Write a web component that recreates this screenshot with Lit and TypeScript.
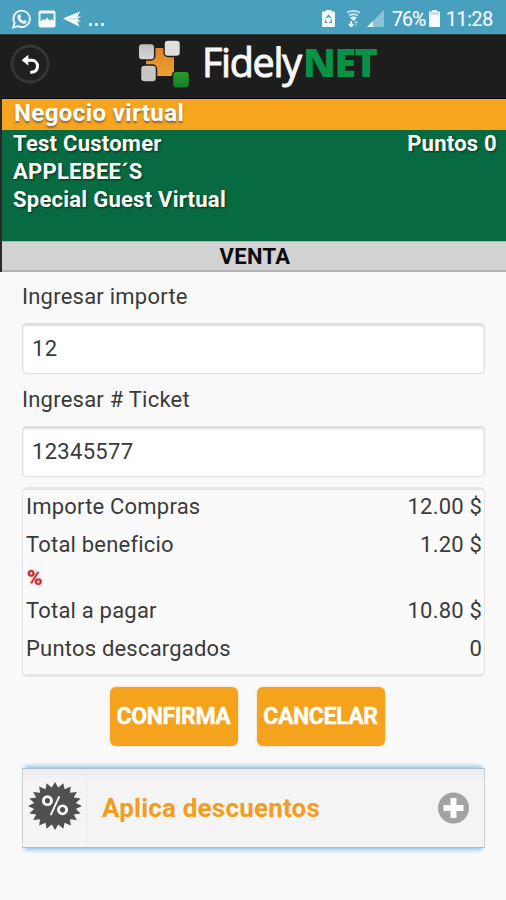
import { LitElement, html, css } from "lit";
import { customElement } from "lit/decorators.js";

const sealPoints = (teeth: number, outer: number, inner: number): string =>
  Array.from({ length: teeth * 2 }, (_, i) => {
    const a = (Math.PI * i) / teeth - Math.PI / 2;
    const r = i % 2 ? inner : outer;
    return `${(50 + r * Math.cos(a)).toFixed(2)},${(50 + r * Math.sin(a)).toFixed(2)}`;
  }).join(" ");

@customElement("status-bar")
class StatusBar extends LitElement {
  static styles = css`
    :host { display: flex; height: 34px; background: #489fbe; color: #f4fbfd; align-items: center; box-sizing: border-box; padding: 3px 14px 0 12px; font: 19.500px/32px Roboto, sans-serif; }
    .left { display: flex; flex: 1; align-items: center; }
    .dots { display: flex; gap: 3.200px; margin: 11px 0 0 7px; }
    .dots i { width: 3px; height: 3px; border-radius: 1px; background: #f4fbfd; }
    svg { display: block; flex: none; }
    .pic { margin-left: 6px; }
    .plane { margin-left: 7px; }
    .wifi { margin-left: 11px; }
    .signal { margin-left: 6px; }
    .pct { margin-left: 8px; width: 35px; letter-spacing: -0.900px; white-space: nowrap; -webkit-text-stroke: 0.200px #f4fbfd; }
    .batt { margin-left: 2px; }
    .time { margin-left: 6px; width: 46px; letter-spacing: -0.350px; white-space: nowrap; -webkit-text-stroke: 0.200px #f4fbfd; }
    .text { position: relative; top: 1px; }
  `;
  render() {
    return html`
      <div class="left">
        <svg width="20" height="20" viewBox="0 0 20 20" fill="none">
          <path d="M1.2 18.4 2.6 14A8.2 8.2 0 1 1 6 17.2Z" stroke="#f4fbfd" stroke-width="1.900" />
          <path d="M6.800 5.200 8.300 5.400 9 7.800 8 8.900Q9 11 11.400 12L12.500 10.900 14.800 12Q14.800 14.500 12.200 14.700Q7 14 5.300 8.400Q5.200 6 6.800 5.200Z" fill="#f4fbfd" />
        </svg>
        <svg class="pic" width="18" height="18" viewBox="0 0 18 18">
          <rect x=".5" y=".5" width="17" height="17" rx="2" fill="#f4fbfd" />
          <path d="M2.500 3.500h13v7.500l-2-2-1.800 1.500-2.700-3-2.500 3-1.500-1.500-2.500 2.500Z" fill="#489fbe" />
        </svg>
        <svg class="plane" width="19" height="16" viewBox="0 0 19 16">
          <path d="M0 7.600 17.500 .3 14.300 5.500 18 5.500 14.300 8 18 10.500 14.300 10.500 16.500 15.700Z" fill="#f4fbfd" />
          <path d="M6 7.800H14" stroke="#b8dce8" stroke-width="1" />
        </svg>
        <span class="dots"><i></i><i></i><i></i></span>
      </div>
      <svg width="13" height="17" viewBox="0 0 13 17">
        <path d="M3.500 0h6v1.500H12q1 0 1 1V16q0 1-1 1H1q-1 0-1-1V2.500q0-1 1-1h2.500Z" fill="#f4fbfd" />
        <path d="M4.200 8 6.500 5.200 8.800 8M9.300 9.500V12.500H7M5.500 12.500H3.500V9.800" fill="none" stroke="#489fbe" stroke-width="1.200" />
      </svg>
      <svg class="wifi" width="15" height="17" viewBox="0 0 15 17" fill="none">
        <path d="M1 2.500Q7.500-.5 14 2.500M3 5.500Q7.500 3 12 5.500" stroke="#c4e1eb" stroke-width="1.800" />
        <path d="M4 7.500Q7.500 5.300 11 7.500L7.500 11Z" fill="#f4fbfd" />
        <path d="M5.200 11v5.500M3 14l2.200 2.500L7.400 14" stroke="#f4fbfd" stroke-width="1.700" />
        <path d="M10 16.500V11M8.500 13 10 11l2 2" stroke="#94c8da" stroke-width="1.300" />
      </svg>
      <svg class="signal" width="17" height="17" viewBox="0 0 17 17">
        <path d="M17 0V17H0Z" fill="#8ac3d7" />
        <path d="M6 11V17H0Z" fill="#e4f3f8" />
      </svg>
      <span class="pct text">76%</span>
      <svg class="batt" width="11" height="17" viewBox="0 0 11 17">
        <path d="M3 0h5v1.500h3V17H0V1.500h3Z" fill="#f4fbfd" />
        <path d="M1 2.500h9v2H1Z" fill="#b4dae7" />
      </svg>
      <span class="time text">11:28</span>
    `;
  }
}

@customElement("brand-header")
class BrandHeader extends LitElement {
  static styles = css`
    :host { display: flex; height: 64px; background: #1d1d1d; box-sizing: border-box; padding-left: 10px; border-top: 1px solid #303c40; }
    .back { margin-top: 9px; flex: none; }
    .mark { margin: 3px 0 0 87px; flex: none; }
    .name { margin-left: 9px; height: 60px; font: 600 39.500px/60px "Open Sans", "Noto Sans", sans-serif; white-space: nowrap; display: flex; margin-top: -3px; }
    .fidely { color: #f7f7f7; width: 101px; font-weight: 500; letter-spacing: -1.300px; -webkit-text-stroke: 1px #f7f7f7; }
    .net { color: #079246; font-weight: 800; letter-spacing: -1.500px; }
  `;
  render() {
    return html`
      <svg class="back" width="40" height="40" viewBox="0 0 40 40" fill="none">
        <circle cx="20" cy="20" r="18" fill="#202020" stroke="#353535" stroke-width="2.800" />
        <path d="M15.500 16.300H21.500C25.500 16.300 27.500 19.300 27.500 22.200C27.500 25.800 24.800 28.200 20.300 28.500" stroke="#fff" stroke-width="3" />
        <path d="M11.600 16.200 18.300 10.700V21.400Z" fill="#fff" />
      </svg>
      <svg class="mark" width="56" height="52" viewBox="0 0 56 52">
        <defs>
          <linearGradient id="o" x2="0" y2="1"><stop stop-color="#dd8424" /><stop offset="1" stop-color="#eca232" /></linearGradient>
          <linearGradient id="g" x2="0" y2="1"><stop stop-color="#2aa02f" /><stop offset="1" stop-color="#137d22" /></linearGradient>
          <linearGradient id="w" x2="0" y2="1"><stop stop-color="#bfbdbf" /><stop offset="1" stop-color="#d9d6d6" /></linearGradient>
        </defs>
        <path d="M14 10H37V34Q37 38 33 38H15Q9 38 9 30V18Z" fill="url(#o)" />
        <g stroke="#1d1d1d" stroke-width="1.500">
          <rect x="1.200" y="5.500" width="16.500" height="16.500" rx="4" fill="url(#w)" />
          <rect x="27" y="2" width="16.500" height="16.500" rx="4" fill="#dedede" />
          <rect x="3.500" y="27" width="16" height="17" rx="4" fill="#c9c6c8" />
          <rect x="35.500" y="33.300" width="17" height="17" rx="4" fill="url(#g)" />
        </g>
      </svg>
      <div class="name"><span class="fidely">Fidely</span><span class="net">NET</span></div>
    `;
  }
}

@customElement("summary-box")
class SummaryBox extends LitElement {
  static styles = css`
    :host { display: block; box-sizing: border-box; height: 190px; margin-top: 10px; padding: 0 2px 0 3px; border: 1.500px solid #e4e4e4; border-top: 3px solid #e6e6e6; border-bottom: 3px solid #e6e6e6; border-radius: 5px; background: #fafafa; }
    .row { display: flex; justify-content: space-between; height: 38px; line-height: 33px; letter-spacing: 0.200px; }
    .percent { height: 28px; line-height: 25px; padding-left: 1px; font-weight: 700; font-size: 21px; color: #d3212f; text-shadow: 0 0 3px #999; }
  `;
  rows: [string, string][] = [
    ["Importe Compras", "12.00 $"],
    ["Total beneficio", "1.20 $"],
    ["%", ""],
    ["Total a pagar", "10.80 $"],
    ["Puntos descargados", "0"],
  ];
  render() {
    return this.rows.map(([k, v]) =>
      v ? html`<div class="row"><span>${k}</span><span>${v}</span></div>` : html`<div class="percent">${k}</div>`
    );
  }
}

@customElement("discount-panel")
class DiscountPanel extends LitElement {
  static styles = css`
    :host { display: flex; align-items: center; height: 80px; margin-top: 22px; box-sizing: border-box; border: 1px solid #cfd2d5; border-top-color: #a9bccb; border-bottom-color: #a9bccb; background: linear-gradient(#ececec, #f4f4f4 12px, #f5f5f5); box-shadow: 0 -5px 4px -3px #8fc3ee, 0 5px 4px -3px #8fc3ee; padding: 0 14px 0 0; }
    .seal { width: 64px; height: 70px; display: flex; align-items: center; justify-content: center; border-right: 1.500px solid #e8e8e8; box-sizing: border-box; padding: 0 0 4px 1px; }
    .title { flex: 1; padding-left: 15px; font-size: 26px; line-height: 30px; font-weight: 700; letter-spacing: 0.200px; color: #f39c1d; white-space: nowrap; }
  `;
  render() {
    return html`
      <div class="seal">
        <svg width="54" height="48" viewBox="0 0 100 100" preserveAspectRatio="none">
          <polygon points=${sealPoints(20, 50, 39)} fill="#505050" />
          <g fill="none" stroke="#f8f8f8">
            <ellipse cx="36" cy="39" rx="7.500" ry="8.500" stroke-width="5.500" />
            <ellipse cx="64" cy="58" rx="7.500" ry="8.500" stroke-width="5.500" />
            <path d="M58 30 42 69" stroke-width="3.500" />
          </g>
        </svg>
      </div>
      <span class="title">Aplica descuentos</span>
      <svg width="33" height="33" viewBox="0 0 33 33">
        <circle cx="16.500" cy="16" r="15.500" fill="#a3a3a3" />
        <path d="M16.500 6V26M6.500 16H26.500" stroke="#fff" stroke-width="6" />
      </svg>
    `;
  }
}

@customElement("app-root")
class AppRoot extends LitElement {
  static styles = css`
    :host { display: block; width: 506px; height: 900px; overflow: hidden; background: #f9f9f9; color: #3a3a3a; font: 22px/28px Roboto, sans-serif; }
    .account { border-left: 2px solid #292b2a; border-top: 1px solid #0b0b14; color: #fff; font-weight: 700; }
    .business { height: 31px; line-height: 29px; padding-left: 12px; background: #f7a41e; font-size: 24px; letter-spacing: 0.400px; text-shadow: 0 2px 2px #86693c; }
    .customer { display: flex; justify-content: space-between; height: 111px; box-sizing: border-box; padding: 0 9px 0 11px; letter-spacing: 0.250px; background: #086a41; text-shadow: 1px 1px 2px #03351f; }
    .mode { height: 31px; box-sizing: border-box; line-height: 29px; padding-left: 2px; letter-spacing: 0.350px; text-align: center; background: #d3d3d3; color: #0b0b0b; border-bottom: 2px solid #b3b3b3; border-top: 1px solid #a9b8ae; }
    .form { padding: 0 21px 0 22px; }
    .label { height: 51px; line-height: 49px; letter-spacing: 0.230px; }
    .label.second { height: 52px; line-height: 51px; }
    .field { display: block; width: 100%; height: 51px; box-sizing: border-box; padding: 0 9px; font: inherit; letter-spacing: 0.300px; color: #3a3a3a; background: #fff; border: 1.500px solid #dedede; border-radius: 4px; outline: 0; box-shadow: inset 0 2px 2px #dcdcdc; }
    .buttons { display: flex; justify-content: center; gap: 19px; margin: 10px 13px 0 0; }
    .btn { width: 128px; height: 59px; padding: 0; border: 0; border-radius: 6px; background: #f5a21d; color: #fff; font: 700 23px/59px Roboto, sans-serif; letter-spacing: -0.400px; -webkit-text-stroke: 0.400px #fff; box-shadow: 0 0 2px #e5c795; white-space: nowrap; }
  `;
  render() {
    return html`
      <status-bar></status-bar>
      <brand-header></brand-header>
      <section class="account">
        <div class="business">Negocio virtual</div>
        <div class="customer">
          <div>
            <div>Test Customer</div>
            <div>APPLEBEE´S</div>
            <div>Special Guest Virtual</div>
          </div>
          <div>Puntos 0</div>
        </div>
        <div class="mode">VENTA</div>
      </section>
      <main class="form">
        <div class="label">Ingresar importe</div>
        <input class="field" .value=${"12"} />
        <div class="label second">Ingresar # Ticket</div>
        <input class="field" .value=${"12345577"} />
        <summary-box></summary-box>
        <div class="buttons">
          <button class="btn">CONFIRMA</button>
          <button class="btn">CANCELAR</button>
        </div>
        <discount-panel></discount-panel>
      </main>
    `;
  }
}
